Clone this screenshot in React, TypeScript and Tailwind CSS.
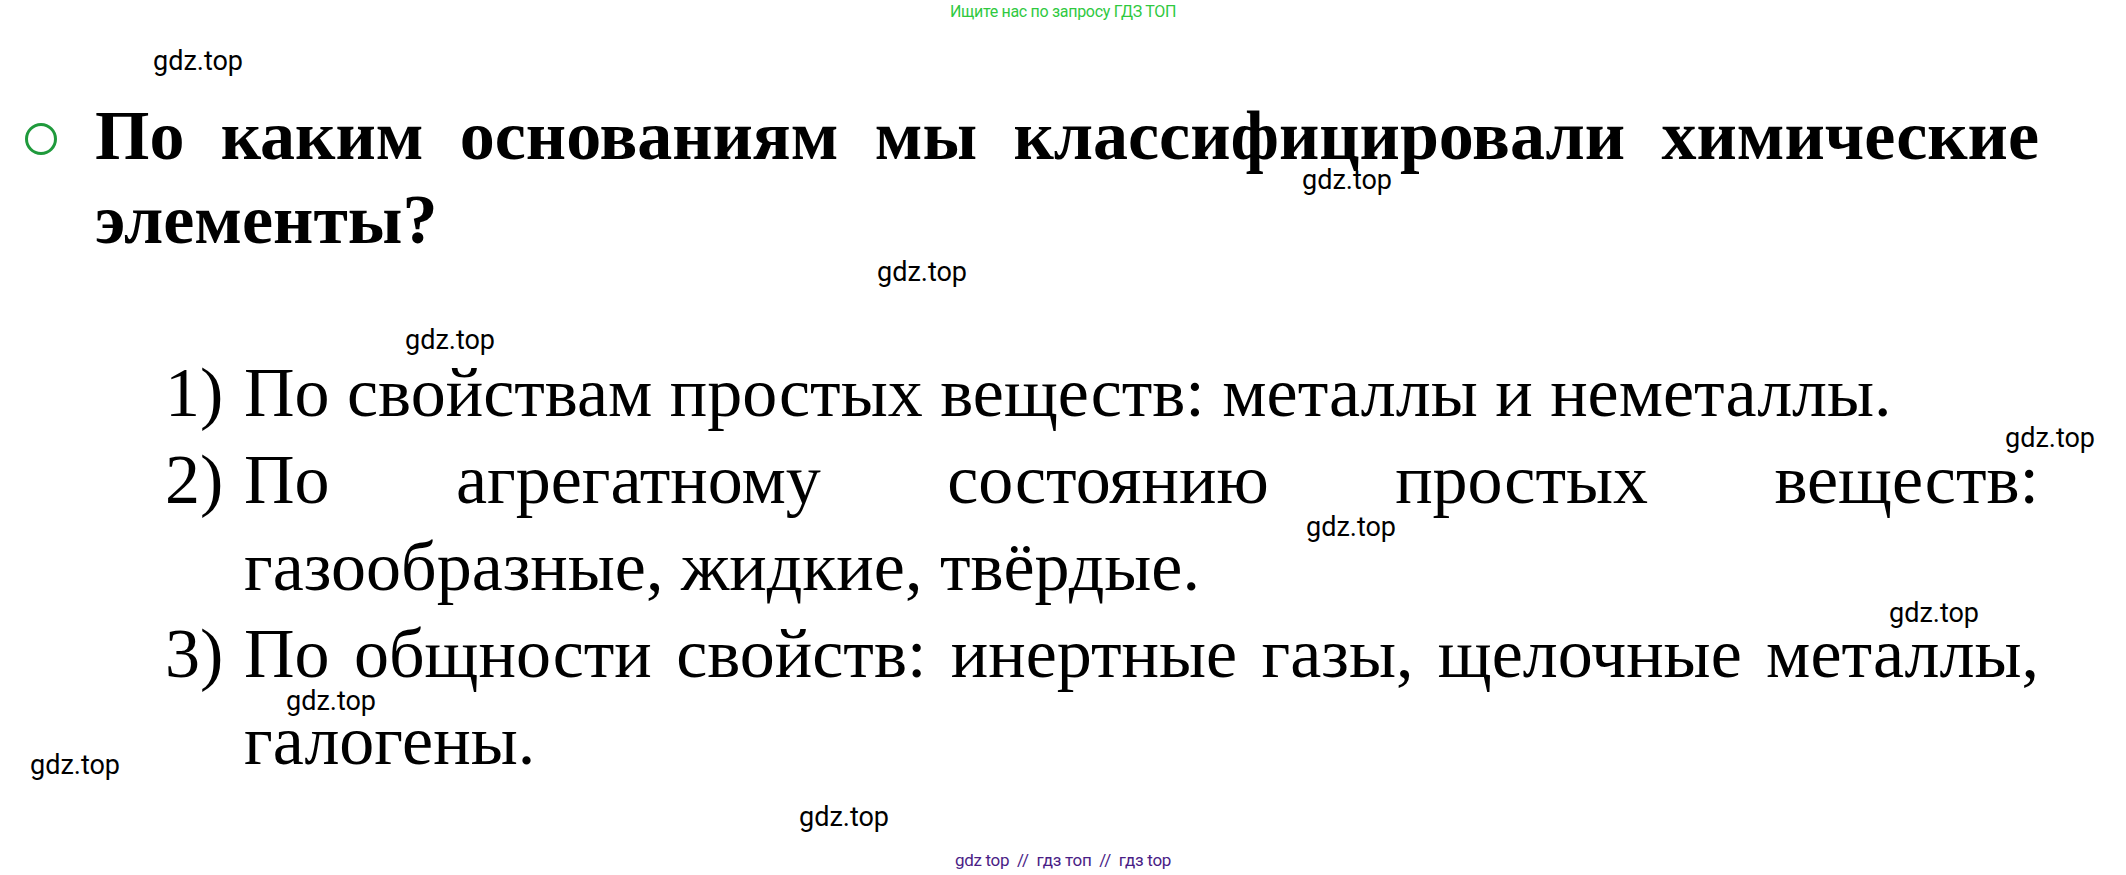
const marks: [number, number][] = [
  [153, 45], [1302, 164], [877, 256], [405, 324], [2005, 422],
  [1306, 511], [1889, 597], [286, 685], [30, 749], [799, 801],
];

const answers = [
  'По свойствам простых веществ: металлы и неметаллы.',
  'По агрегатному состоянию простых веществ: газообразные, жидкие, твёрдые.',
  'По общности свойств: инертные газы, щелочные металлы, галогены.',
];

export default function App() {
  return (
    <div className="relative w-[2126px] h-[875px] bg-white overflow-hidden">
      <div className="pt-[2px] text-center text-[16px] leading-[20px] text-[#2fc93f] font-[Roboto,sans-serif] tracking-[-0.3px]">
        Ищите нас по запросу ГДЗ ТОП
      </div>

      {/* question */}
      <div className="mt-[72px] flex items-start pl-[25px] pr-[87px]">
        <div className="mt-[29px] w-[32px] h-[32px] shrink-0 rounded-full border-[3px] border-[#1f9a3c]" />
        <h1 className="ml-[38px] flex-1 text-[70px] leading-[84px] font-bold text-black text-justify font-[Liberation_Serif,serif]">
          По каким основаниям мы классифицировали химические элементы?
        </h1>
      </div>

      {/* answers */}
      <ol className="mt-[87px] pl-[165px] pr-[87px] font-[Liberation_Serif,serif] text-[70px] leading-[87px] text-black">
        {answers.map((a, i) => (
          <li key={i} className="flex">
            <span className="w-[79px] shrink-0">{i + 1})</span>
            <span className="flex-1 text-justify">{a}</span>
          </li>
        ))}
      </ol>

      {marks.map(([x, y], i) => (
        <span
          key={i}
          className="absolute text-[27px] leading-[32px] text-black font-[Roboto,sans-serif]"
          style={{ left: x, top: y }}
        >
          gdz.top
        </span>
      ))}

      <div className="absolute left-0 right-0 top-[849px] text-center text-[17px] leading-[22px] text-[#4a1d86] font-[Roboto,sans-serif] tracking-[-0.3px] whitespace-pre">
        {'gdz top  //  гдз топ  //  гдз top'}
      </div>
    </div>
  );
}
